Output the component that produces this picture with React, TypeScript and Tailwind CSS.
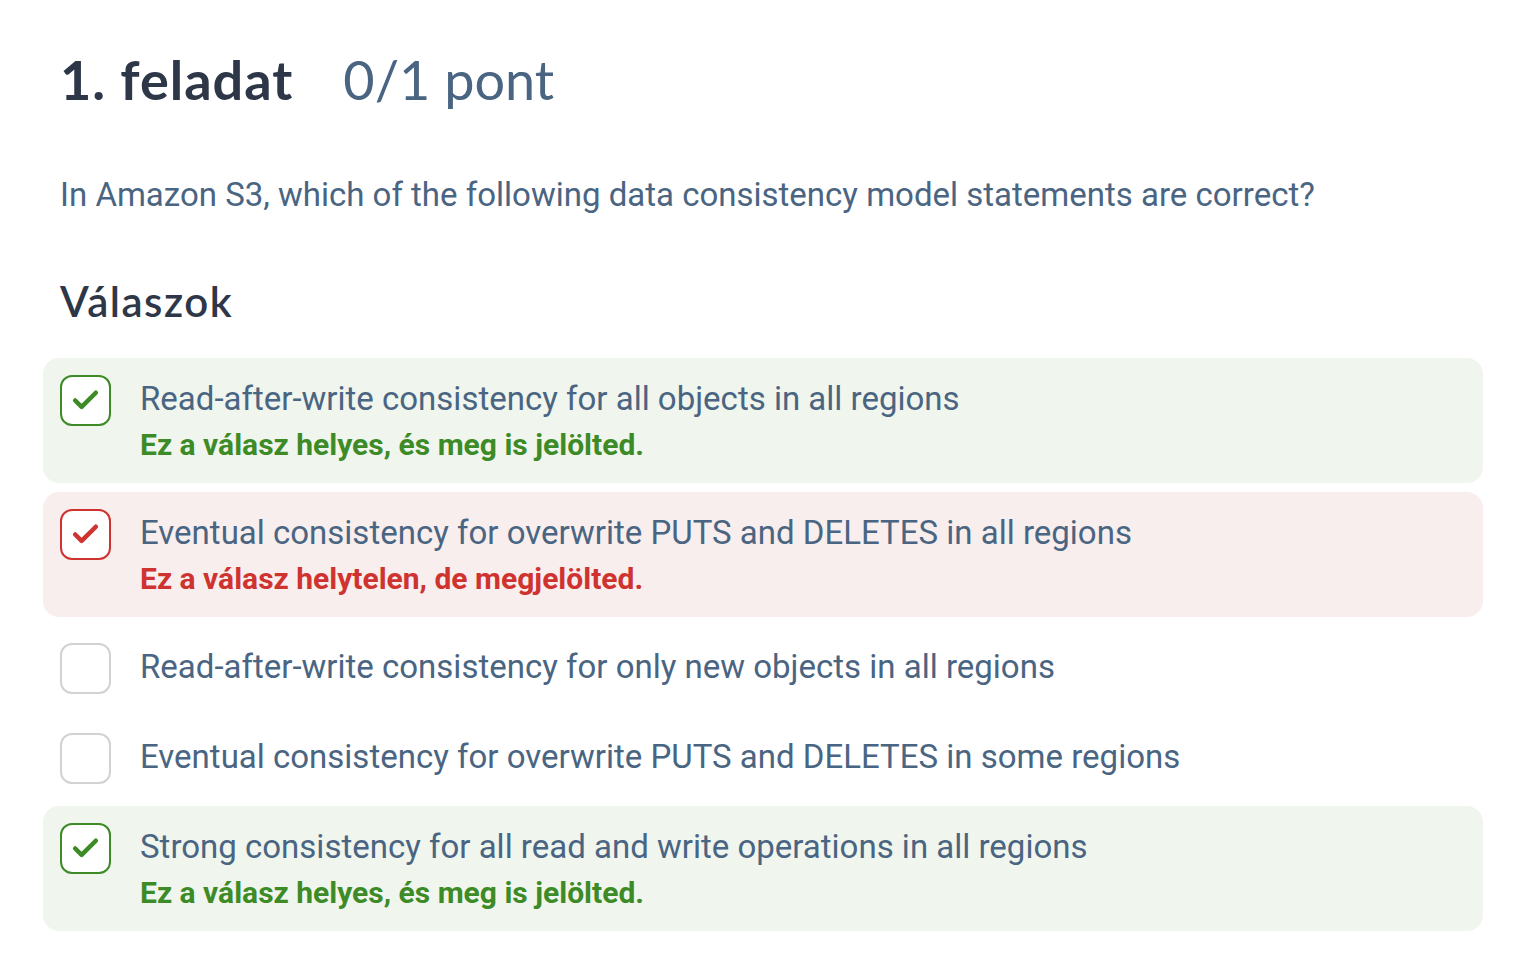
import React from 'react';
import { Check } from 'lucide-react';

type Status = 'correct' | 'wrong' | 'none';

const answers: { text: string; status: Status }[] = [
  { text: 'Read-after-write consistency for all objects in all regions', status: 'correct' },
  { text: 'Eventual consistency for overwrite PUTS and DELETES in all regions', status: 'wrong' },
  { text: 'Read-after-write consistency for only new objects in all regions', status: 'none' },
  { text: 'Eventual consistency for overwrite PUTS and DELETES in some regions', status: 'none' },
  { text: 'Strong consistency for all read and write operations in all regions', status: 'correct' },
];

const headingFont = { fontFamily: 'Lato, "Noto Sans", sans-serif' };

const AnswerRow: React.FC<{ text: string; status: Status }> = ({ text, status }) => {
  const box =
    status === 'correct'
      ? 'border-[#3d8b26] text-[#3d8b26]'
      : status === 'wrong'
      ? 'border-[#cf3330] text-[#cf3330]'
      : 'border-[#d2d2d2]';
  const bg =
    status === 'correct' ? 'bg-[#f0f5ee] pb-[17px]' : status === 'wrong' ? 'bg-[#f9eeee] pb-[17px]' : 'pb-[13px]';

  return (
    <div className={`flex items-start gap-[29px] rounded-[16px] pt-[15px] pl-[17px] pr-[15px] ${bg}`}>
      <div className={`mt-[2px] flex h-[51px] w-[51px] shrink-0 items-center justify-center rounded-[12px] border-2 bg-white ${box}`}>
        {status !== 'none' && <Check size={31} strokeWidth={3.5} />}
      </div>
      <div>
        <div className="text-[33px] leading-[51px] text-[#4a6582]">{text}</div>
        {status === 'correct' && (
          <div className="text-[30px] font-bold leading-[42px] text-[#3d8b26]">Ez a válasz helyes, és meg is jelölted.</div>
        )}
        {status === 'wrong' && (
          <div className="text-[30px] font-bold leading-[42px] text-[#cf3330]">Ez a válasz helytelen, de megjelölted.</div>
        )}
      </div>
    </div>
  );
};

export default function App() {
  return (
    <div className="min-h-screen bg-white" style={{ fontFamily: 'Roboto, "Liberation Sans", sans-serif' }}>
      <div className="w-[1440px] ml-[43px]">
        <h1 className="flex items-baseline gap-[50px] px-[17px] pt-[53px] text-[54px] leading-none" style={headingFont}>
          <span className="font-bold tracking-[1px] text-[#2d3748]">1. feladat</span>
          <span className="font-normal text-[#4a6582]">0/1 pont</span>
        </h1>
        <p className="mt-[68px] px-[17px] text-[33px] leading-[40px] text-[#4a6582]">
          In Amazon S3, which of the following data consistency model statements are correct?
        </p>
        <h2 className="mt-[65px] px-[17px] text-[42px] font-semibold tracking-[1.5px] leading-none text-[#2d3748]" style={headingFont}>
          Válaszok
        </h2>
        <div className="mt-[36px] flex flex-col gap-[9px]">
          {answers.map((a, i) => (
            <AnswerRow key={i} text={a.text} status={a.status} />
          ))}
        </div>
      </div>
    </div>
  );
}
